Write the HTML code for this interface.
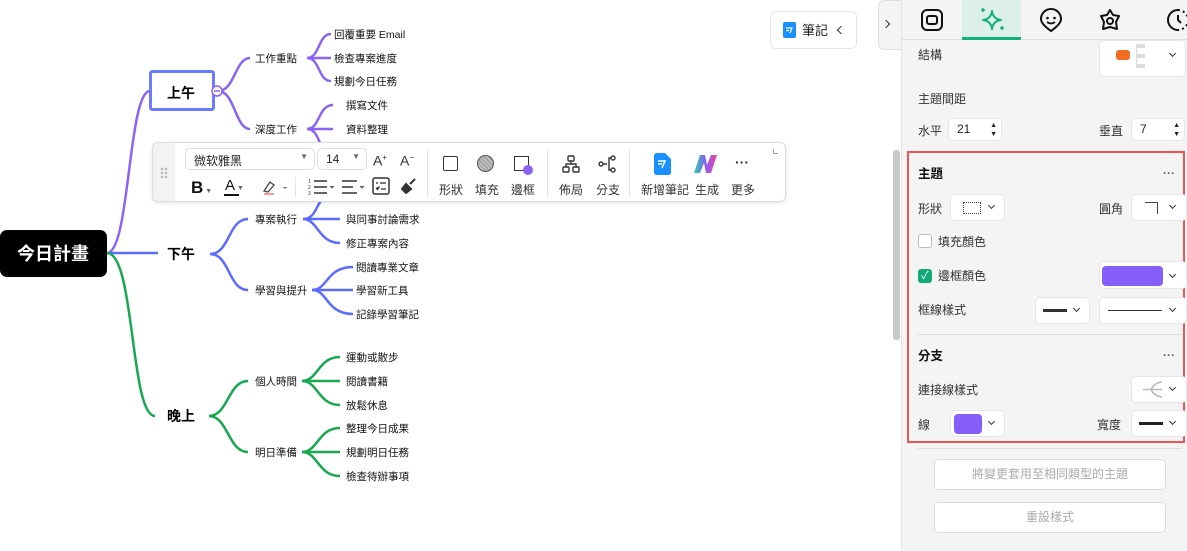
<!DOCTYPE html>
<html><head><meta charset="utf-8">
<style>
*{box-sizing:border-box;margin:0;padding:0}
body{width:1187px;height:551px;overflow:hidden;background:#fff;font-family:"Liberation Sans","Noto Sans CJK TC",sans-serif;position:relative;color:#222}
.abs{position:absolute}
svg text{font-family:"Liberation Sans","Noto Sans CJK TC",sans-serif}
.tb{left:152px;top:142px;width:634px;height:60px;background:#fff;border:1px solid #ddd;border-radius:6px;box-shadow:0 1px 4px rgba(0,0,0,.12)}
.lbl{font-size:12px;color:#333;position:absolute;line-height:14px}
.panel{left:901px;top:0;width:286px;height:551px;background:#f4f4f4;border-left:1px solid #e4e4e4}
.pl{position:absolute;font-size:12px;color:#333;line-height:14px}
.box{position:absolute;background:#fff;border:1px solid #e6e6e6;border-radius:5px}
.chev{position:absolute;width:6px;height:6px;border-right:1.5px solid #333;border-bottom:1.5px solid #333;transform:rotate(45deg)}
.btn{position:absolute;left:934px;width:232px;height:31px;background:#fff;border:1px solid #ddd;border-radius:5px;font-size:12px;color:#aaa;text-align:center;line-height:29px}
</style></head><body>

<svg class="abs" style="left:0;top:0" width="900" height="551">
<g fill="none" stroke-width="2.5">
<path d="M107 253 C130 253 128 91 150 91" stroke="#8b63f5"/>
<path d="M107 253 L158 253" stroke="#5b6cff"/>
<path d="M107 253 C135 253 130 416 155 416" stroke="#18a84f"/>
<g stroke="#8b63f5">
<path d="M218 91 C235 91 235 58 250 58"/><path d="M218 91 C235 91 235 129 250 129"/>
<path d="M307 58 C320 58 318 34 331 34"/><path d="M307 58 L331 58"/><path d="M307 58 C320 58 318 81 331 81"/>
<path d="M307 129 C320 129 318 105 333 105"/><path d="M307 129 L333 129"/><path d="M307 129 C320 129 318 150 328 152"/>
</g>
<g stroke="#5b6cff">
<path d="M210 254 C230 254 228 219 248 219"/><path d="M210 254 C230 254 228 290 248 290"/>
<path d="M303 219 C318 219 316 198 328 196"/><path d="M303 219 L340 219"/><path d="M303 219 C318 219 318 243 340 243"/>
<path d="M312 290 C328 290 326 267 353 267"/><path d="M312 290 L353 290"/><path d="M312 290 C328 290 326 314 353 314"/>
</g>
<g stroke="#18a84f">
<path d="M209 416 C228 416 228 381 248 381"/><path d="M209 416 C228 416 228 452 248 452"/>
<path d="M302 381 C318 381 318 357 340 357"/><path d="M302 381 L340 381"/><path d="M302 381 C318 381 318 405 340 405"/>
<path d="M302 452 C318 452 318 428 340 428"/><path d="M302 452 L340 452"/><path d="M302 452 C318 452 318 476 340 476"/>
</g>
</g>
<rect x="0" y="230" width="107" height="47" rx="7" fill="#000"/>
<text x="53" y="260" fill="#fff" font-size="18" font-weight="bold" text-anchor="middle">今日計畫</text>
<rect x="150.5" y="71.5" width="63" height="38" rx="2" fill="#fff" stroke="#6b7bff" stroke-width="3"/>
<text x="181" y="98" font-size="14" font-weight="bold" text-anchor="middle">上午</text>
<circle cx="217" cy="91" r="5" fill="#fff" stroke="#8b63f5" stroke-width="1.5"/><line x1="214" y1="91" x2="220" y2="91" stroke="#8b63f5" stroke-width="1.5"/>
<text x="181" y="259" font-size="14" font-weight="bold" text-anchor="middle">下午</text>
<text x="181" y="421" font-size="14" font-weight="bold" text-anchor="middle">晚上</text>
<g font-size="10.5" fill="#111">
<text x="255" y="62">工作重點</text><text x="255" y="133">深度工作</text>
<text x="334" y="38">回覆重要 Email</text><text x="334" y="62">檢查專案進度</text><text x="334" y="85">規劃今日任務</text>
<text x="346" y="109">撰寫文件</text><text x="346" y="133">資料整理</text>
<text x="255" y="223">專案執行</text><text x="255" y="294">學習與提升</text>
<text x="346" y="223">與同事討論需求</text><text x="346" y="247">修正專案內容</text>
<text x="356" y="271">閱讀專業文章</text><text x="356" y="294">學習新工具</text><text x="356" y="318">記錄學習筆記</text>
<text x="255" y="385">個人時間</text><text x="255" y="456">明日準備</text>
<text x="346" y="361">運動或散步</text><text x="346" y="385">閱讀書籍</text><text x="346" y="409">放鬆休息</text>
<text x="346" y="432">整理今日成果</text><text x="346" y="456">規劃明日任務</text><text x="346" y="480">檢查待辦事項</text>
</g>
</svg>

<!-- toolbar -->
<div class="abs tb">
 <div class="abs" style="left:0;top:0;width:22px;height:58px;background:#f3f3f3;border-radius:6px 0 0 6px"></div>
 <div class="abs" style="left:7px;top:24px;width:8px;height:12px;background:radial-gradient(circle,#bbb 1.2px,transparent 1.5px) 0 0/4px 4px"></div>
 <div class="abs" style="left:32px;top:5px;width:130px;height:22px;border:1px solid #ddd;border-radius:5px;font-size:12px;padding:3px 8px">微软雅黑<span style="position:absolute;right:6px;top:3px;font-size:8px;color:#666">▼</span></div>
 <div class="abs" style="left:164px;top:5px;width:50px;height:22px;border:1px solid #ddd;border-radius:5px;font-size:12px;padding:3px 8px">14<span style="position:absolute;right:6px;top:3px;font-size:8px;color:#666">▼</span></div>
 <div class="lbl" style="left:220px;top:8px;font-size:14px">A<sup style="font-size:8px">+</sup></div>
 <div class="lbl" style="left:247px;top:8px;font-size:14px">A<sup style="font-size:8px">−</sup></div>
 <div class="lbl" style="left:38px;top:36px;font-size:17px;font-weight:bold;color:#111;line-height:18px">B<span style="font-size:7px;color:#666"> ▼</span></div>
 <div class="lbl" style="left:72px;top:35px;font-size:15px;color:#111;line-height:16px">A<span style="font-size:7px;color:#666"> ▼</span></div>
 <div class="abs" style="left:71px;top:51px;width:15px;height:2px;background:#111"></div>
 <svg class="abs" style="left:108px;top:36px" width="30" height="18"><path d="M3 12 L9 3 L13 6 L7 13 Z" fill="none" stroke="#444" stroke-width="1.3"/><rect x="3" y="14" width="10" height="2" fill="#f39c9c"/><path d="M22 8 l2 2 l2 -2" fill="#666"/></svg>
 <div class="abs" style="left:142px;top:34px;width:1px;height:20px;background:#e5e5e5"></div>
 <svg class="abs" style="left:155px;top:35px" width="30" height="18"><g stroke="#333" stroke-width="1.5"><line x1="6" y1="3" x2="19" y2="3"/><line x1="6" y1="9" x2="19" y2="9"/><line x1="6" y1="15" x2="19" y2="15"/></g><g fill="#333" font-size="5"><text x="0" y="5">1</text><text x="0" y="11">2</text><text x="0" y="17">3</text></g><path d="M22 8 l2 2 l2 -2" fill="#666" stroke="#666"/></svg>
 <svg class="abs" style="left:188px;top:35px" width="30" height="18"><g stroke="#333" stroke-width="1.5"><line x1="1" y1="3" x2="16" y2="3"/><line x1="1" y1="9" x2="12" y2="9"/><line x1="1" y1="15" x2="16" y2="15"/></g><path d="M19 8 l2 2 l2 -2" fill="#666" stroke="#666"/></svg>
 <svg class="abs" style="left:219px;top:34px" width="18" height="18"><rect x="1" y="1" width="16" height="16" rx="2" fill="none" stroke="#333" stroke-width="1.5"/><g stroke="#333" stroke-width="1.3"><line x1="4" y1="6" x2="6" y2="6"/><line x1="8" y1="6" x2="14" y2="6"/><path d="M4 11 l1.5 1.5 l2 -3"/><line x1="9" y1="12" x2="14" y2="12"/></g></svg>
 <svg class="abs" style="left:248px;top:35px" width="16" height="16"><path d="M14 1 L9 6 M5 6 L10 11 L5 15 L1 11 Z" fill="#333" stroke="#333" stroke-width="2"/></svg>
 <div class="abs" style="left:274px;top:6px;width:1px;height:48px;background:#e5e5e5"></div>
 <div class="abs" style="left:290px;top:13px;width:15px;height:15px;border:1.5px solid #333;border-radius:2px"></div>
 <div class="abs" style="left:324px;top:12px;width:17px;height:17px;border:1.5px solid #555;border-radius:50%;background:repeating-linear-gradient(45deg,#bbb 0 2px,#999 2px 3px)"></div>
 <div class="abs" style="left:361px;top:13px;width:15px;height:15px;border:1.5px solid #333"></div>
 <div class="abs" style="left:370px;top:22px;width:10px;height:10px;border-radius:50%;background:#8b63f5"></div>
 <div class="lbl" style="left:286px;top:40px">形狀</div><div class="lbl" style="left:322px;top:40px">填充</div><div class="lbl" style="left:358px;top:40px">邊框</div>
 <div class="abs" style="left:394px;top:6px;width:1px;height:48px;background:#e5e5e5"></div>
 <svg class="abs" style="left:409px;top:12px" width="18" height="18"><g fill="none" stroke="#333" stroke-width="1.4"><rect x="6" y="1" width="6" height="5" rx="1"/><rect x="1" y="12" width="6" height="5" rx="1"/><rect x="11" y="12" width="6" height="5" rx="1"/><path d="M9 6 V9 M4 12 V9 H14 V12"/></g></svg>
 <svg class="abs" style="left:445px;top:12px" width="18" height="18"><g fill="none" stroke="#333" stroke-width="1.4"><circle cx="3" cy="9" r="2"/><circle cx="15" cy="3" r="2"/><circle cx="15" cy="15" r="2"/><path d="M5 9 H9 M13 3 H11 V15 H13"/></g></svg>
 <div class="lbl" style="left:406px;top:40px">佈局</div><div class="lbl" style="left:443px;top:40px">分支</div>
 <div class="abs" style="left:476px;top:6px;width:1px;height:48px;background:#e5e5e5"></div>
 <svg class="abs" style="left:501px;top:10px" width="18" height="22"><path d="M3 0 H11 L17 6 V19 Q17 22 14 22 H3 Q0 22 0 19 V3 Q0 0 3 0Z" fill="#1890ff"/><path d="M4 8 H11 L8 15 M4 11 H8" stroke="#fff" stroke-width="1.5" fill="none"/></svg>
 <svg class="abs" style="left:541px;top:12px" width="24" height="18"><defs><linearGradient id="g" x1="0" x2="1"><stop offset="0" stop-color="#22d3a6"/><stop offset=".5" stop-color="#8b5cf6"/><stop offset="1" stop-color="#ec4899"/></linearGradient></defs><path d="M0 18 L6 0 H11 L13 10 L17 0 H23 L17 18 H12 L10 8 L6 18Z" fill="url(#g)"/></svg>
 <div class="lbl" style="left:582px;top:12px;font-size:14px;font-weight:bold">···</div>
 <div class="lbl" style="left:488px;top:40px">新增筆記</div><div class="lbl" style="left:542px;top:40px">生成</div><div class="lbl" style="left:578px;top:40px">更多</div>
 <div class="abs" style="left:620px;top:6px;width:5px;height:5px;border-left:1px solid #999;border-bottom:1px solid #999"></div>
</div>

<!-- note button -->
<div class="abs" style="left:770px;top:11px;width:87px;height:38px;border:1px solid #e5e5e5;border-radius:6px;background:#fff"></div>
<svg class="abs" style="left:783px;top:22px" width="13" height="16"><rect width="13" height="16" rx="2" fill="#1890ff"/><path d="M3 6 H9 L7 11 M3 8.5 H6" stroke="#fff" stroke-width="1.2" fill="none"/></svg>
<div class="abs" style="left:802px;top:23px;font-size:13px;line-height:15px">筆記</div>
<div class="chev" style="left:838px;top:27px;transform:rotate(135deg)"></div>
<div class="abs" style="left:878px;top:0;width:24px;height:50px;background:#f4f4f4;border:1px solid #e0e0e0;border-radius:6px 0 0 6px"></div>
<div class="chev" style="left:883px;top:21px;transform:rotate(-45deg)"></div>
<div class="abs" style="left:893px;top:150px;width:7px;height:190px;background:#c8c8c8;border-radius:3px"></div>

<!-- panel -->
<div class="abs panel">
 <div class="abs" style="left:0;top:0;width:286px;height:40px;border-bottom:1px solid #e0e0e0"></div>
 <div class="abs" style="left:60px;top:0;width:59px;height:40px;background:#dcefe8;border-bottom:3px solid #12b07a"></div>
 <svg class="abs" style="left:19px;top:9px" width="22" height="22"><rect x="1" y="1" width="20" height="20" rx="5" fill="none" stroke="#111" stroke-width="2"/><rect x="6" y="7" width="10" height="8" rx="2" fill="none" stroke="#111" stroke-width="2"/></svg>
 <svg class="abs" style="left:78px;top:7px" width="26" height="26"><path d="M12 4 Q13 12 21 13 Q13 14 12 22 Q11 14 3 13 Q11 12 12 4Z" fill="none" stroke="#12b07a" stroke-width="2" stroke-linejoin="round"/><path d="M3 1 v4 M1 3 h4 M22 19 v4 M20 21 h4" stroke="#12b07a" stroke-width="1.5"/></svg>
 <svg class="abs" style="left:137px;top:8px" width="24" height="26"><path d="M12 23 Q2 16 2 11 A10 10 0 0 1 22 11 Q22 16 12 23Z" fill="none" stroke="#111" stroke-width="2"/><circle cx="8.5" cy="10" r="1.3" fill="#111"/><circle cx="15.5" cy="10" r="1.3" fill="#111"/><path d="M8 14 Q12 17 16 14" fill="none" stroke="#111" stroke-width="1.8"/></svg>
 <svg class="abs" style="left:196px;top:8px" width="24" height="24"><path d="M12 2 L15 7 L21 8 L18 14 L19 21 L12 19 L5 21 L6 14 L3 8 L9 7 Z" fill="none" stroke="#111" stroke-width="2" stroke-linejoin="round"/><circle cx="12" cy="13" r="3" fill="none" stroke="#111" stroke-width="2"/></svg>
 <svg class="abs" style="left:264px;top:8px" width="24" height="24"><path d="M12 2 A10 10 0 1 0 12 22" fill="none" stroke="#111" stroke-width="2"/><path d="M12 2 A10 10 0 0 1 22 12 A10 10 0 0 1 12 22" fill="none" stroke="#111" stroke-width="2" stroke-dasharray="2 3"/><path d="M12 7 V12 L15 15" fill="none" stroke="#111" stroke-width="2"/></svg>
 <div class="pl" style="left:16px;top:48px">結構</div>
 <div class="box" style="left:197px;top:40px;width:87px;height:37px"></div>
 <div class="abs" style="left:214px;top:50px;width:14px;height:10px;background:#f26d21;border-radius:3px"></div>
 <div class="abs" style="left:234px;top:44px;width:9px;height:24px;border-left:1px solid #ddd;background:linear-gradient(#ddd 0 4px,transparent 4px 10px,#ddd 10px 14px,transparent 14px 20px,#ddd 20px 24px)"></div>
 <div class="chev" style="left:268px;top:51px;width:5px;height:5px"></div>
 <div class="pl" style="left:16px;top:92px">主題間距</div>
 <div class="pl" style="left:16px;top:124px">水平</div>
 <div class="box" style="left:46px;top:118px;width:54px;height:23px;font-size:12px;padding:3px 8px;line-height:15px">21<span style="position:absolute;right:4px;top:2px;font-size:7px;line-height:9px">▲<br>▼</span></div>
 <div class="pl" style="left:197px;top:124px">垂直</div>
 <div class="box" style="left:229px;top:118px;width:54px;height:23px;font-size:12px;padding:3px 8px;line-height:15px">7<span style="position:absolute;right:4px;top:2px;font-size:7px;line-height:9px">▲<br>▼</span></div>
 <!-- red box -->
 <div class="abs" style="left:5px;top:151px;width:278px;height:292px;border:2.5px solid #f05454"></div>
 <div class="pl" style="left:16px;top:167px;font-weight:bold;font-size:12.5px;color:#111">主題</div>
 <div class="pl" style="left:261px;top:166px;color:#666;font-weight:bold">···</div>
 <div class="pl" style="left:16px;top:202px">形狀</div>
 <div class="box" style="left:48px;top:194px;width:55px;height:27px"></div>
 <div class="abs" style="left:61px;top:202px;width:18px;height:12px;border:1px dotted #444"></div>
 <div class="chev" style="left:87px;top:203px;width:5px;height:5px"></div>
 <div class="pl" style="left:197px;top:202px">圓角</div>
 <div class="box" style="left:229px;top:194px;width:56px;height:27px"></div>
 <div class="abs" style="left:243px;top:202px;width:13px;height:12px;border-top:1.5px solid #444;border-right:1.5px solid #444"></div>
 <div class="chev" style="left:268px;top:203px;width:5px;height:5px"></div>
 <div class="abs" style="left:16px;top:234px;width:14px;height:14px;border:1px solid #bbb;border-radius:3px;background:#fff"></div>
 <div class="pl" style="left:36px;top:235px">填充顏色</div>
 <div class="abs" style="left:16px;top:269px;width:14px;height:14px;border-radius:3px;background:#12a877;color:#fff;font-size:11px;line-height:14px;text-align:center">✓</div>
 <div class="pl" style="left:36px;top:269px">邊框顏色</div>
 <div class="box" style="left:197px;top:261px;width:88px;height:28px"></div>
 <div class="abs" style="left:200px;top:266px;width:61px;height:20px;background:#845ef7;border-radius:4px"></div>
 <div class="chev" style="left:268px;top:272px;width:5px;height:5px"></div>
 <div class="pl" style="left:16px;top:303px">框線樣式</div>
 <div class="box" style="left:133px;top:297px;width:55px;height:27px"></div>
 <div class="abs" style="left:141px;top:309px;width:24px;height:3px;background:#333"></div>
 <div class="chev" style="left:172px;top:306px;width:5px;height:5px"></div>
 <div class="box" style="left:197px;top:297px;width:88px;height:27px"></div>
 <div class="abs" style="left:206px;top:310px;width:54px;height:1px;background:#333"></div>
 <div class="chev" style="left:268px;top:306px;width:5px;height:5px"></div>
 <div class="abs" style="left:16px;top:334px;width:264px;height:1px;background:#ddd"></div>
 <div class="pl" style="left:16px;top:349px;font-weight:bold;font-size:12.5px;color:#111">分支</div>
 <div class="pl" style="left:261px;top:348px;color:#666;font-weight:bold">···</div>
 <div class="pl" style="left:16px;top:383px">連接線樣式</div>
 <div class="box" style="left:229px;top:376px;width:56px;height:27px"></div>
 <svg class="abs" style="left:240px;top:381px" width="22" height="17"><path d="M1 8.5 H9 M20 1 Q12 2 9 8.5 Q12 15 20 16 M9 8.5 H20" fill="none" stroke="#bbb" stroke-width="1.5"/></svg>
 <div class="chev" style="left:268px;top:385px;width:5px;height:5px"></div>
 <div class="pl" style="left:16px;top:418px">線</div>
 <div class="box" style="left:48px;top:410px;width:55px;height:27px"></div>
 <div class="abs" style="left:52px;top:414px;width:28px;height:20px;background:#845ef7;border-radius:4px"></div>
 <div class="chev" style="left:87px;top:419px;width:5px;height:5px"></div>
 <div class="pl" style="left:195px;top:418px">寬度</div>
 <div class="box" style="left:229px;top:410px;width:56px;height:27px"></div>
 <div class="abs" style="left:237px;top:422px;width:24px;height:3px;background:#222"></div>
 <div class="chev" style="left:268px;top:419px;width:5px;height:5px"></div>
 <div class="abs" style="left:16px;top:448px;width:264px;height:1px;background:#ddd"></div>
</div>
<div class="btn" style="top:459px">將變更套用至相同類型的主題</div>
<div class="btn" style="top:502px">重設樣式</div>
</body></html>
